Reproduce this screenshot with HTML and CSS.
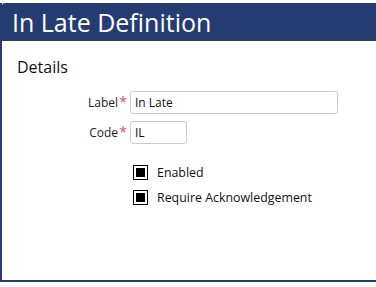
FILE: index.html
```html
<!DOCTYPE html>
<html lang="en">
<head>
  <meta charset="UTF-8">
  <title>In Late Definition</title>
  <link rel="stylesheet" href="styles.css">
</head>
<body>

<div class="panel">
  <div class="panel-title">In Late Definition</div>
  <div class="panel-body">
    <h3>Details</h3>
    <div class="row">
      <label class="lbl">Label<span class="req">*</span></label>
      <div class="field wide">In Late</div>
    </div>
    <div class="row">
      <label class="lbl">Code<span class="req">*</span></label>
      <div class="field short">IL</div>
    </div>
    <div class="checks">
      <div class="check"><span class="box"></span>Enabled</div>
      <div class="check"><span class="box"></span>Require Acknowledgement</div>
    </div>
  </div>
</div>

</body>
</html>
```

FILE: styles.css
```css
body {
  font-family: 'Open Sans', sans-serif;
  background: white;
  margin: 0;
  padding: 3px 0 0 0;
}

.panel {
  border-left: 2px solid #243c72;
  border-bottom: 2px solid #243c72;
  height: 279px;
  box-sizing: border-box;
}

.panel-title {
  background: #243c72;
  color: white;
  font-size: 25px;
  height: 38px;
  line-height: 38px;
  padding-left: 10px;
  border-top-left-radius: 3px;
}

.panel-body {
  padding: 15px 0 0 15px;
}

h3 {
  font-weight: normal;
  font-size: 16px;
  margin: 0 0 13px 0;
  color: #111;
}

.row {
  display: flex;
  align-items: center;
  margin-bottom: 7px;
}

.lbl {
  width: 101px;
  text-align: right;
  font-size: 12px;
  color: #222;
  padding-right: 12px;
  position: relative;
}

.req {
  color: #d9534f;
  font-size: 14px;
  position: absolute;
  right: 3px;
  top: -2px;
}

.field {
  height: 23px;
  box-sizing: border-box;
  border: 1px solid #ccc;
  border-radius: 3px;
  font-size: 12px;
  line-height: 21px;
  padding-left: 4px;
  color: #111;
}

.wide {
  width: 208px;
}

.short {
  width: 57px;
}

.checks {
  margin: 16px 0 0 116px;
}

.check {
  display: flex;
  align-items: center;
  font-size: 12.4px;
  color: #111;
  height: 25px;
}

.box {
  width: 9px;
  height: 9px;
  background: black;
  border: 2px solid white;
  outline: 1px solid black;
  margin: 0 10px 0 1px;
}
```
